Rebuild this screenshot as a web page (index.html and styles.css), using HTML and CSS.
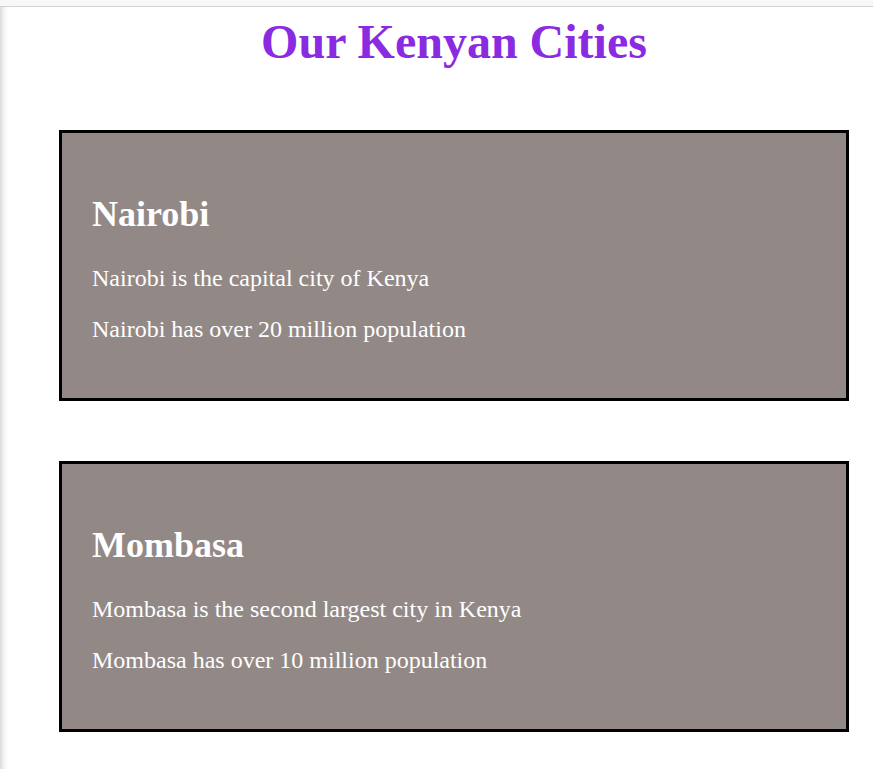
FILE: index.html
```html
<!DOCTYPE html>
<html lang="en">
<head>
<meta charset="utf-8">
<title>Our Kenyan Cities</title>
<link rel="stylesheet" href="styles.css">
</head>
<body>
<div class="topbar"></div>
<div class="page">
  <h1 class="title">Our Kenyan Cities</h1>
  <section class="city">
    <h2 class="city-name">Nairobi</h2>
    <p class="city-fact">Nairobi is the capital city of Kenya</p>
    <p class="city-fact">Nairobi has over 20 million population</p>
  </section>
  <section class="city">
    <h2 class="city-name">Mombasa</h2>
    <p class="city-fact">Mombasa is the second largest city in Kenya</p>
    <p class="city-fact">Mombasa has over 10 million population</p>
  </section>
</div>
</body>
</html>
```

FILE: styles.css
```css
html, body {
  margin: 0;
  padding: 0;
}
body {
  width: 873px;
  height: 769px;
  overflow: hidden;
  background: linear-gradient(to right, #d9d9d9 0, #eeeeee 3px, #fbfbfb 6px, #ffffff 9px) no-repeat;
  background-size: 9px 100%;
  background-color: #fff;
  font-family: "Liberation Serif", "Times New Roman", serif;
}
.topbar {
  height: 6px;
  background: #f7f7f9;
  border-bottom: 1px solid #d2d2d4;
}
.page {
  width: 790px;
  padding: 0 60px 0 59px;
}
.title {
  margin: 7px 0 61px;
  text-align: center;
  font-size: 48px;
  font-weight: bold;
  color: #8a2be2;
}
.city {
  background: #928987;
  border: 3px solid #000;
  padding: 30px;
  margin-bottom: 60px;
  height: 205px;
  color: #fff;
}
.city-name {
  margin: 30px 0 30px;
  font-size: 36px;
  font-weight: bold;
}
.city-fact {
  margin: 0 0 24px;
  font-size: 24px;
}
```
